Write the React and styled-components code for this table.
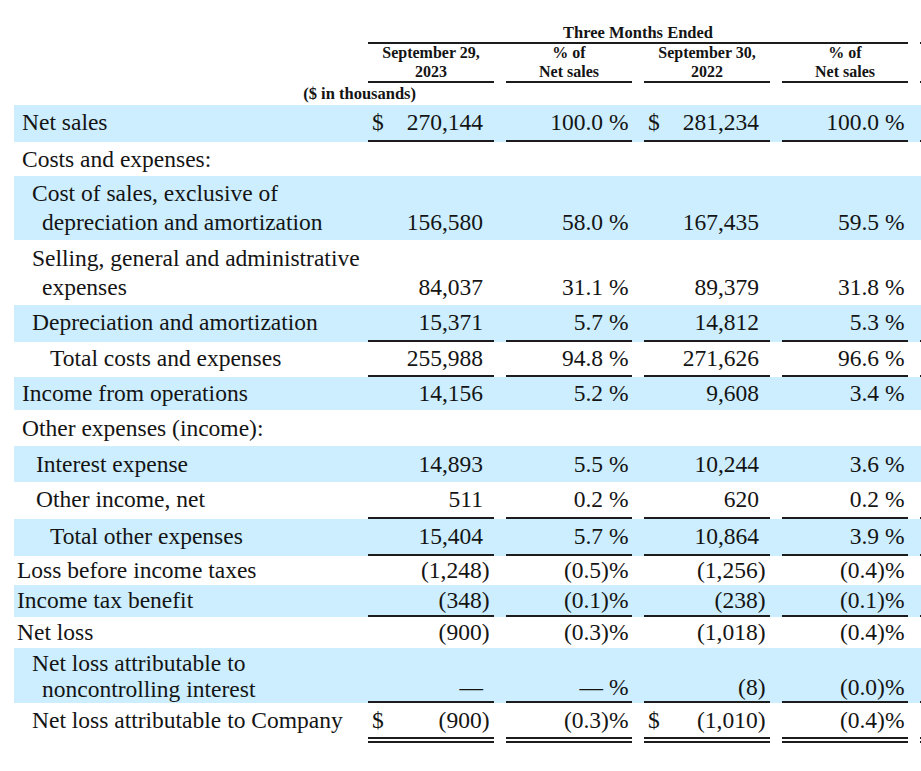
import React from 'react';
import styled, { createGlobalStyle } from 'styled-components';

const GlobalStyle = createGlobalStyle`
  html, body {
    margin: 0;
    padding: 0;
    background: #fff;
    overflow: hidden;
  }
  body {
    font-family: "Liberation Serif", "Times New Roman", serif;
    color: #141414;
  }
`;

const COLS = '342px repeat(4, 126px) 60px';
const RULE = '#1c1c1c';

const rows = [
  { label: ['Net sales'], ind: 8, shade: true, pad: 3, rule: 'single', v: [['$', '270,144'], '100.0 %', ['$', '281,234'], '100.0 %'] },
  { label: ['Costs and expenses:'], ind: 8, pad: 2.5 },
  { label: ['Cost of sales, exclusive of', 'depreciation and amortization'], ind: 18, shade: true, pad: 3, v: ['156,580', '58.0 %', '167,435', '59.5 %'] },
  { label: ['Selling, general and administrative', 'expenses'], ind: 18, pad: 3.5, v: ['84,037', '31.1 %', '89,379', '31.8 %'] },
  { label: ['Depreciation and amortization'], ind: 18, shade: true, pad: 3, rule: 'single', v: ['15,371', '5.7 %', '14,812', '5.3 %'] },
  { label: ['Total costs and expenses'], ind: 36, pad: 2, rule: 'single', v: ['255,988', '94.8 %', '271,626', '96.6 %'] },
  { label: ['Income from operations'], ind: 8, shade: true, pad: 2, v: ['14,156', '5.2 %', '9,608', '3.4 %'] },
  { label: ['Other expenses (income):'], ind: 8, pad: 3.5 },
  { label: ['Interest expense'], ind: 22, shade: true, pad: 3.5, v: ['14,893', '5.5 %', '10,244', '3.6 %'] },
  { label: ['Other income, net'], ind: 22, pad: 3, rule: 'single', v: ['511', '0.2 %', '620', '0.2 %'] },
  { label: ['Total other expenses'], ind: 36, shade: true, pad: 3, rule: 'single', v: ['15,404', '5.7 %', '10,864', '3.9 %'] },
  { label: ['Loss before income taxes'], ind: 3, pad: 0, v: ['(1,248)', '(0.5)%', '(1,256)', '(0.4)%'] },
  { label: ['Income tax benefit'], ind: 3, shade: true, pad: 0.5, rule: 'single', v: ['(348)', '(0.1)%', '(238)', '(0.1)%'] },
  { label: ['Net loss'], ind: 3, pad: 1, v: ['(900)', '(0.3)%', '(1,018)', '(0.4)%'] },
  { label: ['Net loss attributable to', 'noncontrolling interest'], ind: 18, shade: true, pad: 1.5, lh: 26, rule: 'single', v: ['—', '— %', '(8)', '(0.0)%'] },
  { label: ['Net loss attributable to Company'], ind: 18, pad: 2.5, rule: 'double', v: [['$', '(900)'], '(0.3)%', ['$', '(1,010)'], '(0.4)%'] },
];

const App = () => {
  return (
    <Page>
      <GlobalStyle />
      <Table>
        <HeadRow>
          <span />
          <PeriodTitle>Three Months Ended</PeriodTitle>
          <Stub />
        </HeadRow>
        <HeadRow>
          <span />
          <ColHead>September 29,<br />2023</ColHead>
          <ColHead>% of<br />Net sales</ColHead>
          <ColHead>September 30,<br />2022</ColHead>
          <ColHead>% of<br />Net sales</ColHead>
          <Stub />
        </HeadRow>
        <HeadRow>
          <Units>($ in thousands)</Units>
        </HeadRow>

        {rows.map((r, i) => (
          <Row key={i} $shade={r.shade} $pad={r.pad} $lh={r.lh || 29}>
            <Label $ind={r.ind}>
              {r.label.map((l, j) => (
                <React.Fragment key={j}>
                  {j > 0 && <br />}
                  {l}
                </React.Fragment>
              ))}
            </Label>
            {r.v &&
              r.v.map((val, j) => {
                const cur = Array.isArray(val) ? val[0] : null;
                const text = Array.isArray(val) ? val[1] : val;
                const kind = j % 2 === 1 ? 'pct' : text.startsWith('(') ? 'neg' : 'num';
                return (
                  <Amount key={j} $rule={r.rule} $kind={kind}>
                    <span>{cur}</span>
                    <span>{text}</span>
                  </Amount>
                );
              })}
            {r.v && <Amount $rule={r.rule} $kind="num" />}
          </Row>
        ))}
      </Table>
    </Page>
  );
};

export default App;

const Page = styled.div`
  width: 921px;
  height: 771px;
  overflow: hidden;
`;

const Table = styled.div`
  margin-left: 14px;
  width: 1000px;
`;

const HeadRow = styled.div`
  display: grid;
  grid-template-columns: ${COLS};
  column-gap: 12px;
  font-weight: bold;
  font-size: 16px;
  line-height: 18.5px;
`;

const PeriodTitle = styled.div`
  grid-column: 2 / 6;
  text-align: center;
  font-size: 16.5px;
  line-height: 18px;
  padding-top: 24px;
  border-bottom: 2px solid ${RULE};
`;

const Stub = styled.div`
  border-bottom: 2px solid ${RULE};
`;

const ColHead = styled.div`
  text-align: center;
  border-bottom: 2px solid ${RULE};
`;

const Units = styled.div`
  grid-column: 1 / 3;
  text-align: right;
  font-size: 16.5px;
  padding: 2px 78px 1.5px 0;
`;

const Row = styled.div`
  --pad: ${(p) => p.$pad}px;
  display: grid;
  grid-template-columns: ${COLS};
  column-gap: 12px;
  font-size: 23.5px;
  line-height: ${(p) => p.$lh}px;
  background: ${(p) => (p.$shade ? '#cceeff' : 'transparent')};
`;

const Label = styled.div`
  padding: var(--pad) 0 var(--pad) ${(p) => p.$ind + 10}px;
  text-indent: -10px;
  white-space: nowrap;
`;

const Amount = styled.div`
  display: flex;
  justify-content: space-between;
  align-items: flex-end;
  white-space: nowrap;
  padding-top: var(--pad);
  padding-bottom: var(--pad);
  padding-left: 4px;
  padding-right: ${(p) => (p.$kind === 'pct' ? 3.5 : p.$kind === 'neg' ? 4.5 : 11)}px;
  border-bottom: ${(p) =>
    p.$rule === 'double'
      ? `6px double ${RULE}`
      : p.$rule === 'single'
      ? `2px solid ${RULE}`
      : 'none'};
`;
